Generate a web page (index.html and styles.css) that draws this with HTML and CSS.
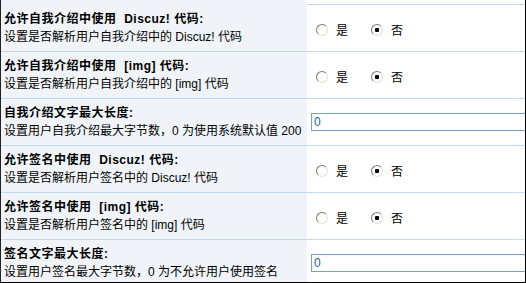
FILE: index.html
```html
<!DOCTYPE html>
<html lang="zh-CN">
<head>
  <meta charset="UTF-8" />
  <title>用户设置</title>
  <link rel="stylesheet" href="styles.css">
</head>
<body>
  <div class="frame">
    <div class="row tail">
      <div class="cell-label"></div>
      <div class="cell-value"></div>
    </div>

    <div class="row">
      <div class="cell-label">
        <b>允许自我介绍中使用&nbsp; Discuz! 代码:</b>
        <span>设置是否解析用户自我介绍中的 Discuz! 代码</span>
      </div>
      <div class="cell-value">
        <label class="opt"><input type="radio" name="bio_code" value="1" /> 是</label>
        <label class="opt"><input type="radio" name="bio_code" value="0" checked /> 否</label>
      </div>
    </div>

    <div class="row">
      <div class="cell-label">
        <b>允许自我介绍中使用&nbsp; [img] 代码:</b>
        <span>设置是否解析用户自我介绍中的 [img] 代码</span>
      </div>
      <div class="cell-value">
        <label class="opt"><input type="radio" name="bio_img" value="1" /> 是</label>
        <label class="opt"><input type="radio" name="bio_img" value="0" checked /> 否</label>
      </div>
    </div>

    <div class="row">
      <div class="cell-label">
        <b>自我介绍文字最大长度:</b>
        <span>设置用户自我介绍最大字节数，0 为使用系统默认值 200</span>
      </div>
      <div class="cell-value">
        <input type="text" class="txt" name="bio_max" value="0" />
      </div>
    </div>

    <div class="row">
      <div class="cell-label">
        <b>允许签名中使用&nbsp; Discuz! 代码:</b>
        <span>设置是否解析用户签名中的 Discuz! 代码</span>
      </div>
      <div class="cell-value">
        <label class="opt"><input type="radio" name="sig_code" value="1" /> 是</label>
        <label class="opt"><input type="radio" name="sig_code" value="0" checked /> 否</label>
      </div>
    </div>

    <div class="row">
      <div class="cell-label">
        <b>允许签名中使用&nbsp; [img] 代码:</b>
        <span>设置是否解析用户签名中的 [img] 代码</span>
      </div>
      <div class="cell-value">
        <label class="opt"><input type="radio" name="sig_img" value="1" /> 是</label>
        <label class="opt"><input type="radio" name="sig_img" value="0" checked /> 否</label>
      </div>
    </div>

    <div class="row">
      <div class="cell-label">
        <b>签名文字最大长度:</b>
        <span>设置用户签名最大字节数，0 为不允许用户使用签名</span>
      </div>
      <div class="cell-value">
        <input type="text" class="txt" name="sig_max" value="0" />
      </div>
    </div>
  </div>
</body>
</html>
```

FILE: styles.css
```css
:root {
  --linha: #c0d9ee;
  --fundo-label: #f0f4f8;
  --borda-input: #7b9ec9;
}

* {
  box-sizing: border-box;
  margin: 0;
  padding: 0;
}

body {
  font-family: "Liberation Sans", "Noto Sans CJK SC", sans-serif;
  font-size: 12px;
  color: #000;
  background: #fff;
}

.frame {
  width: 526px;
  height: 283px;
  border-left: 1px solid #222;
  border-right: 1px solid #000;
  border-bottom: 1px solid #000;
  overflow: hidden;
}

.row {
  display: grid;
  grid-template-columns: 306px 1fr;
  border-top: 1px solid var(--linha);
}

.row.tail {
  border-top: none;
  height: 4px;
}

.cell-label {
  background: var(--fundo-label);
  padding: 5px 3px;
  line-height: 18px;
  white-space: nowrap;
}

.cell-label b,
.cell-label span {
  display: block;
}

.cell-label b {
  font-weight: 700;
  letter-spacing: 0.5px;
}

.cell-value {
  display: flex;
  align-items: center;
  padding-left: 9px;
  white-space: nowrap;
}

.opt {
  display: flex;
  align-items: center;
  gap: 8px;
  margin-right: 23px;
  padding-top: 3px;
}

.opt input[type="radio"] {
  appearance: none;
  -webkit-appearance: none;
  width: 12px;
  height: 12px;
  border-radius: 50%;
  border: 1px solid;
  border-color: #7a7a7a #e4e2da #e4e2da #7a7a7a;
  background: #fdfdf8;
  flex-shrink: 0;
}

.opt input[type="radio"]:checked {
  background: radial-gradient(circle, #000 0 2px, #fdfdf8 2.5px);
}

.txt {
  width: 260px;
  height: 18px;
  margin-left: -5px;
  padding: 0 2px;
  border: 1px solid var(--borda-input);
  font-family: "Liberation Sans", sans-serif;
  font-size: 12px;
  color: #1a5f94;
  background: #fff;
  outline: none;
}
```
